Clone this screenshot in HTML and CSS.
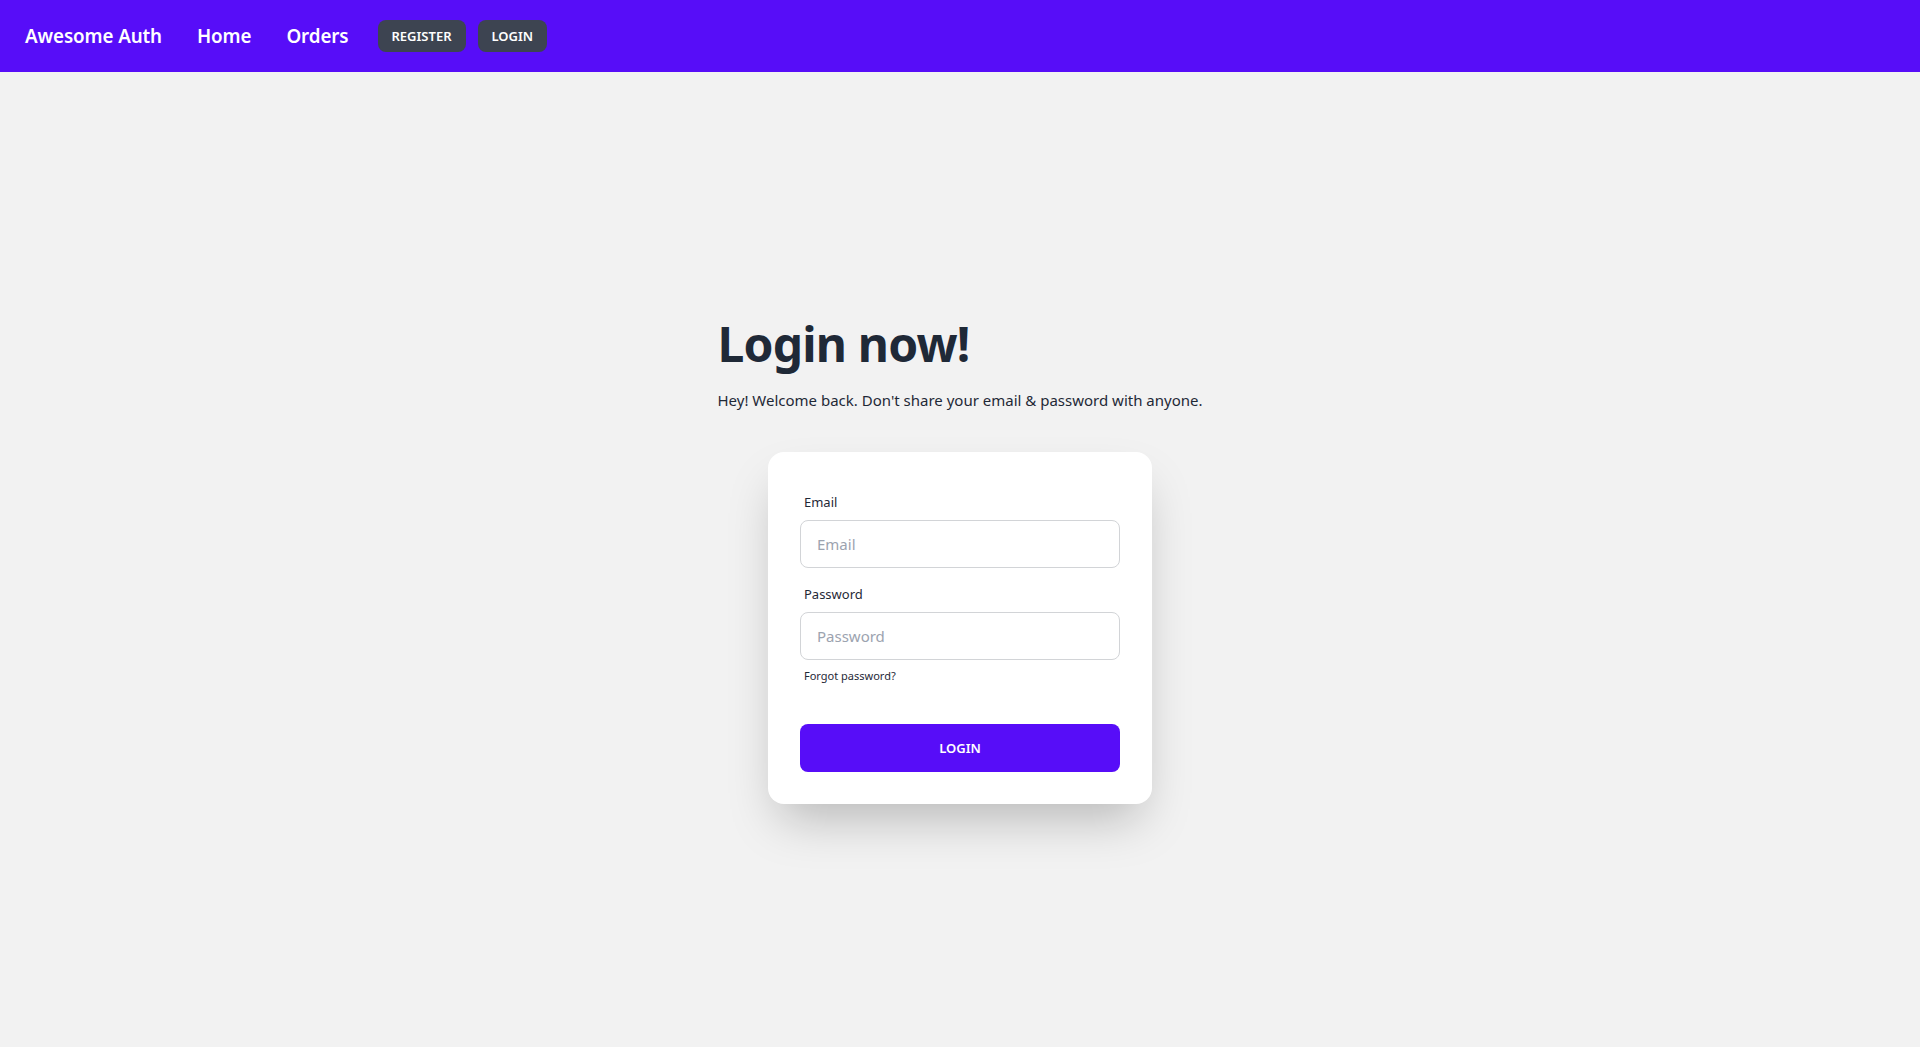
FILE: index.html
```html
<!DOCTYPE html>
<html>
<head>
    <title>Awesome Auth - Login</title>
    <link rel="stylesheet" href="styles.css">
</head>
<body>
    <div class="navbar">
        <a class="brand" href="/">Awesome Auth</a>
        <a class="nav-link" href="/">Home</a>
        <a class="nav-link nav-last" href="/orders">Orders</a>
        <a class="btn-sm" href="/register">Register</a>
        <a class="btn-sm" href="/login">Login</a>
    </div>

    <div class="hero">
        <div class="hero-content">
            <div class="intro">
                <h1>Login now!</h1>
                <p>Hey! Welcome back. Don't share your email &amp; password with anyone.</p>
            </div>
            <div class="card">
                <form class="card-body">
                    <div class="form-control">
                        <label class="label" for="email">Email</label>
                        <input type="text" id="email" name="email" placeholder="Email" class="input">
                    </div>
                    <div class="form-control">
                        <label class="label" for="password">Password</label>
                        <input type="password" id="password" name="password" placeholder="Password" class="input">
                        <div class="label label-alt">
                            <a href="#" class="link">Forgot password?</a>
                        </div>
                    </div>
                    <div class="form-control submit-row">
                        <button type="submit" class="btn-primary">Login</button>
                    </div>
                </form>
            </div>
        </div>
    </div>
</body>
</html>
```

FILE: styles.css
```css
* { box-sizing: border-box; }
html, body { height: 100%; }
body {
    margin: 0;
    font-family: "Noto Sans", "Open Sans", sans-serif;
    background-color: #f2f2f2;
    color: #1f2937;
    display: flex;
    flex-direction: column;
}
a { text-decoration: none; color: inherit; }

.navbar {
    height: 72px;
    flex-shrink: 0;
    background-color: #570df8;
    display: flex;
    align-items: center;
    padding: 0 25px;
}
.brand, .nav-link {
    color: #fff;
    font-size: 18.8px;
    font-weight: 600;
    letter-spacing: -0.1px;
    margin-right: 35px;
}
.nav-link.nav-last { margin-right: 29px; }
.btn-sm {
    background-color: #3d4451;
    color: #fff;
    font-size: 13px;
    font-weight: 600;
    text-transform: uppercase;
    height: 32px;
    padding: 0 14px;
    border-radius: 8px;
    display: flex;
    align-items: center;
    margin-right: 12px;
}

.hero {
    flex: 1;
    display: flex;
    align-items: center;
    justify-content: center;
}
.hero-content {
    display: flex;
    flex-direction: column;
    align-items: center;
    gap: 16px;
    padding: 16px;
}
.intro h1 {
    font-size: 48px;
    line-height: 1;
    font-weight: 700;
    letter-spacing: -0.8px;
    margin: 4px 0 -4px;
}
.intro p {
    font-size: 15px;
    line-height: 24px;
    margin: 0;
    padding: 24px 0;
}

.card {
    width: 384px;
    background-color: #fff;
    border-radius: 16px;
    box-shadow: 0 25px 50px -12px rgba(0, 0, 0, 0.25);
}
.card-body {
    padding: 32px;
    display: flex;
    flex-direction: column;
    gap: 8px;
}
.form-control { display: flex; flex-direction: column; }
.label {
    display: block;
    padding: 8px 4px;
    font-size: 13px;
    line-height: 20px;
}
.label-alt { font-size: 11px; line-height: 16px; }
.input {
    height: 48px;
    border: 1px solid #d2d4d7;
    border-radius: 8px;
    padding: 0 16px;
    font-family: inherit;
    font-size: 15px;
    color: #1f2937;
    background: #fff;
    outline: none;
}
.input::placeholder { color: #9ca3af; }
.submit-row { margin-top: 24px; }
.btn-primary {
    height: 48px;
    border: none;
    border-radius: 8px;
    background-color: #570df8;
    color: #fff;
    font-family: inherit;
    font-size: 13px;
    font-weight: 600;
    text-transform: uppercase;
    cursor: pointer;
}
```
